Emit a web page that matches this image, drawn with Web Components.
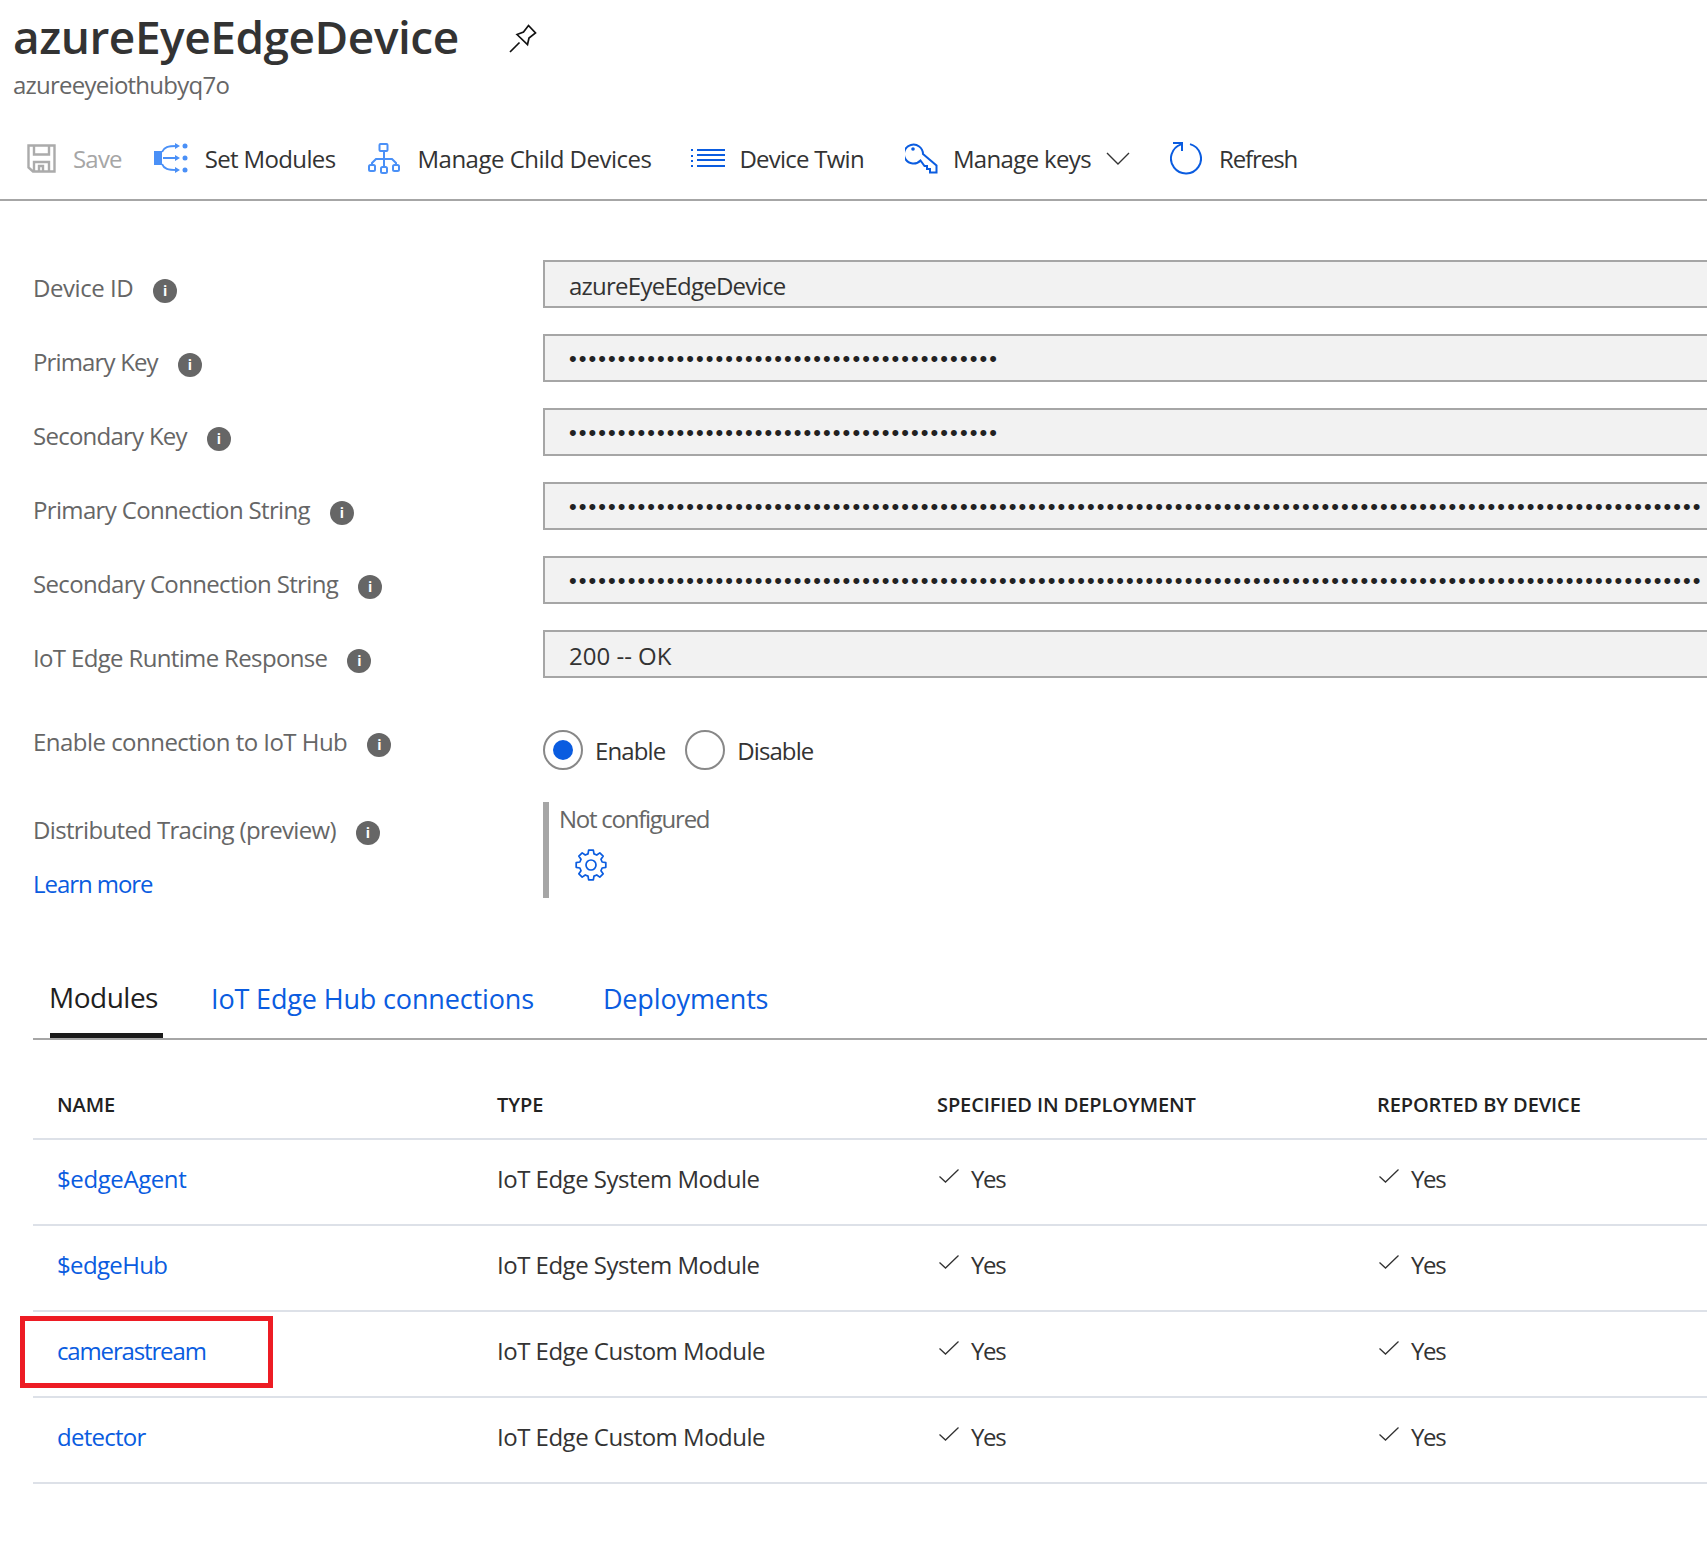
<!DOCTYPE html>
<html>
<head>
<meta charset="utf-8">
<title>azureEyeEdgeDevice</title>
<style>
  html, body { margin: 0; padding: 0; background: #fff; overflow: hidden; }
  body { width: 1707px; height: 1552px; font-family: "Open Sans", "Noto Sans", sans-serif; color: #333; }
</style>
</head>
<body>
<device-page></device-page>

<script>
const FONT = `"Open Sans", "Noto Sans", sans-serif`;

function define(name, styles, markup) {
  customElements.define(name, class extends HTMLElement {
    constructor() {
      super();
      this.attachShadow({ mode: "open" });
      this.shadowRoot.innerHTML = `<style>${styles}</style>${markup(this)}`;
    }
  });
}

// eight teeth, one straight up
function gearPath() {
  const pt = (r, deg) => {
    const a = (deg - 90) * Math.PI / 180;
    return `${(16 + r * Math.cos(a)).toFixed(2)} ${(16 + r * Math.sin(a)).toFixed(2)}`;
  };
  let d = "";
  for (let i = 0; i < 8; i++) {
    const c = i * 45;
    d += `${i ? "L" : "M"}${pt(11.5, c - 15)}L${pt(15, c - 9)}L${pt(15, c + 9)}L${pt(11.5, c + 15)}`;
  }
  return d + "z";
}

const ICONS = {
  save: `<svg width="29" height="29" viewBox="0 0 29 29" fill="none" stroke="#ababab" stroke-width="2.4"><path d="M1.500 1.500h26v26H6l-4.500-4z"/><path d="M7 1.500v9h15v-9M7 27v-9h15v9M12 27v-5h4v5"/></svg>`,
  modules: `<svg width="34" height="30" viewBox="0 0 34 30" fill="none" stroke="#4a90f7" stroke-width="2"><path d="M0 8h8v14H0z" fill="#4a90f7" stroke="none"/><path d="M8 9c2-5 6-6 15-6M8 21c2 5 6 6 15 6M9 15h14"/><path d="M21 0l5 3-5 3zM21 12l5 3-5 3zM21 24l5 3-5 3z" fill="#4a90f7" stroke="none"/><circle cx="31" cy="3" r="2.500" fill="#4a90f7" stroke="none"/><circle cx="31" cy="15" r="2.500" fill="#4a90f7" stroke="none"/><circle cx="31" cy="27" r="2.500" fill="#4a90f7" stroke="none"/></svg>`,
  child: `<svg width="32" height="31" viewBox="0 0 32 31" fill="none" stroke="#4a90f7" stroke-width="2"><rect x="11.500" y="1" width="8" height="7" rx="1"/><rect x="1" y="22" width="6" height="6" rx="1.500"/><rect x="13" y="24" width="6" height="6" rx="1.500"/><rect x="25" y="22" width="6" height="6" rx="1.500"/><path d="M16 8v16M4 22v-2l4-4h16l4 4v2"/></svg>`,
  list: `<svg width="34" height="20" viewBox="0 0 34 20" fill="#0a5ce0"><path d="M0 1h2v2H0zM0 7h2v2H0zM0 12h2v2H0zM0 17h2v2H0zM6 1h28v2H6zM6 6h28v2H6zM6 11h28v2H6zM6 17h28v2H6z"/></svg>`,
  key: `<svg width="33" height="32" viewBox="0 0 33 32" fill="none" stroke="#0a5ce0" stroke-width="2"><path d="M18 12L31.500 23.500V30.500H25V27H22V24H19.500L15.500 18.500A9.500 9.500 0 1 1 18 12z"/><circle cx="8" cy="7" r="1.800" fill="#0a5ce0" stroke="none"/></svg>`,
  chevron: `<svg width="24" height="13" viewBox="0 0 24 13" fill="none" stroke="#333" stroke-width="1.400"><path d="M1 1l11 11L23 1"/></svg>`,
  refresh: `<svg width="32" height="33" viewBox="0 0 32 33" fill="none" stroke="#0a5ce0" stroke-width="2"><path d="M20 2.100A15 15 0 1 1 11 2.400"/><path d="M3 1h9v8"/></svg>`,
  pin: `<svg width="29" height="29" viewBox="0 0 29 29" fill="none" stroke="#111" stroke-width="1.700"><path d="M1 28l9.500-9.500M8 10.500l10.500 10 1.500-6.500 6.500-5-7-7.500-5 6.500z"/></svg>`,
  gear: `<svg width="32" height="32" viewBox="0 0 32 32" fill="none" stroke="#0a5ce0" stroke-width="1.700" stroke-linejoin="round"><circle cx="16" cy="16" r="5"/><path d="${gearPath()}"/></svg>`,
  check: `<svg width="20" height="14" viewBox="0 0 20 14" fill="none" stroke="#333" stroke-width="1.300"><path d="M.5 7.500l6 5.500L19.500 .5"/></svg>`,
};

define("info-dot", `
  :host { display: inline-flex; width: 24px; height: 24px; border-radius: 50%; background: #666; color: #fff;
    align-items: center; justify-content: center; font: 700 14px/1 ${FONT}; letter-spacing: 0; }
`, () => `i`);

define("cmd-button", `
  :host { display: inline-flex; align-items: center; gap: var(--icon-gap, 17px); font-size: 24px; letter-spacing: -.65px; white-space: nowrap; color: #333; }
  :host([disabled]) { color: #a6a6a6; letter-spacing: -.8px; }
  .icon { display: flex; }
`, (el) => `<span class="icon">${ICONS[el.getAttribute("icon")]}</span><slot></slot>${el.hasAttribute("menu") ? `<span class="icon">${ICONS.chevron}</span>` : ""}`);

define("page-header", `
  :host { display: block; padding: 7px 0 0 13px; height: 117px; box-sizing: border-box; }
  .top { display: flex; align-items: center; gap: 50px; }
  h1 { margin: 0; font: 600 46px/58px ${FONT}; letter-spacing: -.48px; color: #333; }
  .sub { font-size: 24px; line-height: 32px; color: #666; letter-spacing: -.75px; margin-top: 4px; }
  .pin { display: flex; margin-top: 4px; }
`, () => `<div class="top"><h1>azureEyeEdgeDevice</h1><span class="pin">${ICONS.pin}</span></div><div class="sub">azureeyeiothubyq7o</div>`);

define("command-bar", `
  :host { display: flex; align-items: center; height: 84px; padding-left: 27px; box-sizing: border-box; border-bottom: 2px solid #a6a6a6; }
`, () => `<slot></slot>`);

define("form-row", `
  :host { display: grid; grid-template-columns: 510px 1400px; padding-left: 33px; margin-bottom: var(--after, 26px); }
  .label { display: flex; flex-direction: column; padding-top: var(--label-top, 12px); font-size: 24px; line-height: 32px; letter-spacing: var(--ls, -.65px); color: #666; }
  .text { display: flex; align-items: flex-start; gap: 20px; }
  info-dot { margin-top: 7px; }
  ::slotted(a) { color: #0a5ce0; text-decoration: none; margin-top: 22px; letter-spacing: -1.050px; }
`, (el) => `<div class="label"><div class="text"><span>${el.getAttribute("label")}</span><info-dot></info-dot></div><slot name="extra"></slot></div><div class="field"><slot></slot></div>`);

define("read-box", `
  :host { display: flex; align-items: center; height: 48px; box-sizing: border-box; border: 2px solid #a6a6a6; background: #f2f2f2; padding: 2px 0 0 24px; overflow: hidden;
    font-size: 24px; letter-spacing: -.75px; color: #333; white-space: nowrap; }
  :host([secret]) { font: 400 22px/1 "Liberation Sans", sans-serif; letter-spacing: 2.070px; color: #222; padding-top: 2px; }
`, () => `<slot></slot>`);

define("radio-choice", `
  :host { display: inline-flex; align-items: center; gap: 12px; font-size: 24px; letter-spacing: -.9px; color: #333; }
  .dot { width: 40px; height: 40px; box-sizing: border-box; border: 2px solid #888; border-radius: 50%; display: flex; align-items: center; justify-content: center; }
  :host([checked]) .dot::after { content: ""; width: 20px; height: 20px; border-radius: 50%; background: #0a5ce0; }
`, () => `<span class="dot"></span><slot></slot>`);

define("tracing-status", `
  :host { display: block; height: 96px; box-sizing: border-box; border-left: 6px solid #a6a6a6; padding: 1px 0 0 10px; color: #666; font-size: 24px; line-height: 32px; letter-spacing: -1.250px; }
  .gear { display: flex; margin: 14px 0 0 16px; }
`, () => `<slot></slot><div class="gear">${ICONS.gear}</div>`);

define("tab-strip", `
  :host { display: flex; margin-left: 33px; height: 97px; box-sizing: border-box; border-bottom: 2px solid #a6a6a6; font-size: 27px; letter-spacing: -.15px; }
  .tab { display: block; padding-top: 37px; color: #0a5ce0; white-space: nowrap; }
  .active { width: 113px; margin: 0 48px 0 17px; color: #1f1f1f; height: 95px; box-sizing: border-box; border-bottom: 5px solid #1a1a1a; padding-top: 35px; font-size: 28px; letter-spacing: -.5px; text-indent: -1px; }
  .two { margin-right: 69px; }
`, () => `<span class="tab active">Modules</span><span class="tab two">IoT Edge Hub connections</span><span class="tab">Deployments</span>`);

define("module-row", `
  :host { display: grid; grid-template-columns: repeat(4, 440px); align-items: center; height: 86px; box-sizing: border-box; margin-left: 33px; padding: 0 0 8px 24px; border-bottom: 2px solid #dde1e8;
    font-size: 24px; letter-spacing: -.5px; color: #333; white-space: nowrap; }
  a { color: #0a5ce0; text-decoration: none; }
  .yes { display: flex; align-items: center; gap: 12px; padding-left: 2px; letter-spacing: -1.300px; }
  svg { margin-top: -4px; }
`, (el) => `<a style="letter-spacing:${el.getAttribute("spacing")}px">${el.getAttribute("name")}</a><span>${el.getAttribute("type")}</span><span class="yes">${ICONS.check}Yes</span><span class="yes">${ICONS.check}Yes</span>`);

define("module-header", `
  :host { display: grid; grid-template-columns: repeat(4, 440px); align-items: end; height: 100px; box-sizing: border-box; margin-left: 33px; padding: 0 0 19px 24px; border-bottom: 2px solid #dde1e8;
    font-size: 20px; font-weight: 600; line-height: 28px; letter-spacing: -.1px; color: #222; white-space: nowrap; }
`, () => `<span>NAME</span><span>TYPE</span><span>SPECIFIED IN DEPLOYMENT</span><span>REPORTED BY DEVICE</span>`);

define("call-out", `
  :host { position: absolute; left: 20px; top: 1316px; width: 253px; height: 72px; box-sizing: border-box; border: 5px solid #ed1c24; }
`, () => ``);

define("device-page", `
  :host { display: block; position: relative; width: 1707px; height: 1552px; overflow: hidden; }
  .form { padding-top: 59px; }
`, () => {
  const dots = (n) => "•".repeat(n);
  return `
  <page-header></page-header>
  <command-bar>
    <cmd-button icon="save" disabled>Save</cmd-button>
    <cmd-button icon="modules" style="margin-left:32px">Set Modules</cmd-button>
    <cmd-button icon="child" style="margin-left:33px;letter-spacing:-.5px">Manage Child Devices</cmd-button>
    <cmd-button icon="list" style="margin-left:40px;--icon-gap:14px;letter-spacing:-.75px">Device Twin</cmd-button>
    <cmd-button icon="key" menu style="margin-left:41px;--icon-gap:15px">Manage keys</cmd-button>
    <cmd-button icon="refresh" style="margin-left:40px;letter-spacing:-1.100px">Refresh</cmd-button>
  </command-bar>
  <div class="form">
    <form-row label="Device ID" style="--ls:-.45px"><read-box>azureEyeEdgeDevice</read-box></form-row>
    <form-row label="Primary Key" style="--ls:-.85px"><read-box secret>${dots(44)}</read-box></form-row>
    <form-row label="Secondary Key" style="--ls:-.75px"><read-box secret>${dots(44)}</read-box></form-row>
    <form-row label="Primary Connection String"><read-box secret>${dots(116)}</read-box></form-row>
    <form-row label="Secondary Connection String"><read-box secret>${dots(116)}</read-box></form-row>
    <form-row label="IoT Edge Runtime Response" style="--after:44px"><read-box style="letter-spacing:0">200 -- OK</read-box></form-row>
    <form-row label="Enable connection to IoT Hub" style="--label-top:4px;--after:32px;--ls:-.53px">
      <div style="display:flex;gap:20px;padding-top:8px"><radio-choice checked>Enable</radio-choice><radio-choice>Disable</radio-choice></div>
    </form-row>
    <form-row label="Distributed Tracing (preview)" style="--after:43px">
      <a slot="extra">Learn more</a>
      <tracing-status>Not configured</tracing-status>
    </form-row>
  </div>
  <tab-strip></tab-strip>
  <module-header></module-header>
  <module-row name="$edgeAgent" spacing="-.4" type="IoT Edge System Module"></module-row>
  <module-row name="$edgeHub" spacing="-.65" type="IoT Edge System Module"></module-row>
  <module-row name="camerastream" spacing="-1.15" type="IoT Edge Custom Module"></module-row>
  <module-row name="detector" spacing="-.75" type="IoT Edge Custom Module"></module-row>
  <call-out></call-out>`;
});
</script>
</body>
</html>
